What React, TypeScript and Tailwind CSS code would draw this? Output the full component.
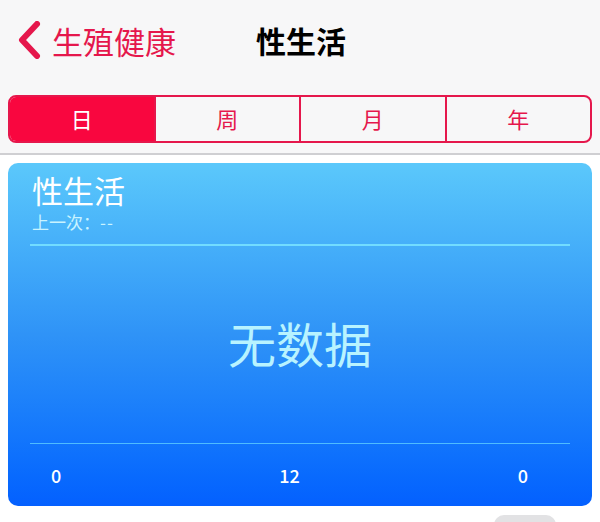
import React from "react";

const segments = ["日", "周", "月", "年"];

export default function App() {
  return (
    <div
      className="h-[522px] w-[600px] overflow-hidden bg-white"
      style={{ fontFamily: '"Noto Sans CJK SC", "Noto Sans", sans-serif' }}
    >
      {/* Nav + segmented control */}
      <div className="h-[155px] border-b-2 border-[#cfcfd2] bg-[#f7f7f8]">
        <div className="grid h-[78px] grid-cols-[1fr_auto_1fr] items-center pt-[2px]">
          <div className="flex items-center pl-[16px]">
            <svg width="26" height="38" viewBox="0 0 26 38" className="mr-[10px]">
              <polyline
                points="21,3 6,19 21,35"
                fill="none"
                stroke="#e5174c"
                strokeWidth="6"
                strokeLinecap="round"
                strokeLinejoin="round"
              />
            </svg>
            <span className="text-[31px] leading-none text-[#e5174c]">生殖健康</span>
          </div>
          <div className="pl-[2px] text-[30px] font-bold leading-none text-black">性生活</div>
          <div />
        </div>
        <div className="mx-[8px] mt-[17px] flex h-[48px] overflow-hidden rounded-[8px] border-2 border-[#e5174c]">
          {segments.map((s, i) => (
            <div
              key={s}
              className={
                i === 0
                  ? "flex flex-1 items-center justify-center bg-[#f9063f] pb-[2px] text-[22px] text-white"
                  : "flex flex-1 items-center justify-center border-l-2 border-[#e5174c] pb-[2px] text-[22px] text-[#e5174c]"
              }
            >
              {s}
            </div>
          ))}
        </div>
      </div>

      {/* Card */}
      <div className="mx-[8px] mt-[8px] flex h-[343px] flex-col rounded-[10px] bg-gradient-to-b from-[#5bc8fb] via-[#2f93f7] to-[#0460ff] px-[22px]">
        <div className="pl-[2px] pt-[10px]">
          <div className="text-[31px] leading-[34px] text-white">性生活</div>
          <div className="mt-[5px] text-[17px] leading-[20px] text-[#c9f3ff]">
            上一次：<span className="tracking-[1px]">--</span>
          </div>
        </div>
        <div className="mt-[12px] h-[2px] bg-[#72dcff]" />
        <div className="flex flex-1 items-center justify-center pb-[6px] text-[48px] text-[#b8f3ff]">无数据</div>
        <div className="h-[1px] bg-[#4fbcff]" />
        <div className="flex h-[62px] items-center justify-between pl-[21px] pr-[42px] text-[18px] font-medium text-white">
          <span>0</span>
          <span>12</span>
          <span>0</span>
        </div>
      </div>

      <div className="ml-[494px] mt-[9px] h-[20px] w-[62px] rounded-full bg-[#e2e2e4]" />
    </div>
  );
}
